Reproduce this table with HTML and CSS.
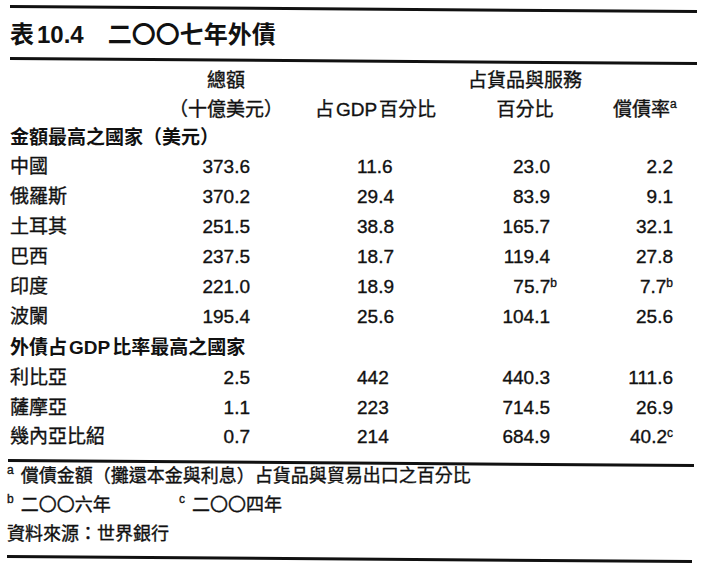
FILE: index.html
```html
<!DOCTYPE html>
<html lang="zh-Hant">
<head>
<meta charset="utf-8">
<title>表10.4 二〇〇七年外債</title>
<link rel="stylesheet" href="styles.css">
</head>
<body>
<div class="page">
  <div class="rule r1"></div>
  <h1 class="title"><span class="tno">表<span class="lat">10.4</span></span><span class="tname">二〇〇七年外債</span></h1>
  <div class="rule r2"></div>
  <div class="table">
    <div class="row head">
      <div class="c0"></div>
      <div class="hc">總額<br>（十億美元）</div>
      <div class="hc">占<span class="lat">GDP</span>百分比</div>
      <div class="hc">占貨品與服務<br>百分比</div>
      <div class="hc h4">償債率<sup class="fn">a</sup></div>
    </div>
    <div class="group g1">金額最高之國家（美元）</div>
    <div class="row data"><div>中國</div><div class="n1">373.6</div><div class="n2">11.6</div><div class="n3">23.0</div><div class="n4">2.2</div></div>
    <div class="row data"><div>俄羅斯</div><div class="n1">370.2</div><div class="n2">29.4</div><div class="n3">83.9</div><div class="n4">9.1</div></div>
    <div class="row data"><div>土耳其</div><div class="n1">251.5</div><div class="n2">38.8</div><div class="n3">165.7</div><div class="n4">32.1</div></div>
    <div class="row data"><div>巴西</div><div class="n1">237.5</div><div class="n2">18.7</div><div class="n3">119.4</div><div class="n4">27.8</div></div>
    <div class="row data"><div>印度</div><div class="n1">221.0</div><div class="n2">18.9</div><div class="n3">75.7<sup class="fn num hang">b</sup></div><div class="n4">7.7<sup class="fn num">b</sup></div></div>
    <div class="row data"><div>波闌</div><div class="n1">195.4</div><div class="n2">25.6</div><div class="n3">104.1</div><div class="n4">25.6</div></div>
    <div class="group g2">外債占<span class="lat">GDP</span>比率最高之國家</div>
    <div class="row data s"><div>利比亞</div><div class="n1">2.5</div><div class="n2">442</div><div class="n3">440.3</div><div class="n4">111.6</div></div>
    <div class="row data s"><div>薩摩亞</div><div class="n1">1.1</div><div class="n2">223</div><div class="n3">714.5</div><div class="n4">26.9</div></div>
    <div class="row data s"><div>幾內亞比紹</div><div class="n1">0.7</div><div class="n2">214</div><div class="n3">684.9</div><div class="n4">40.2<sup class="fn num">c</sup></div></div>
  </div>
  <div class="rule r3"></div>
  <div class="notes">
    <p><sup class="fn gap">a</sup>償債金額（攤還本金與利息）占貨品與貿易出口之百分比</p>
    <p><span class="fitem"><sup class="fn gap">b</sup>二〇〇六年</span><span><sup class="fn gap">c</sup>二〇〇四年</span></p>
    <p>資料來源：世界銀行</p>
  </div>
  <div class="rule r4"></div>
</div>
</body>
</html>
```
FILE: styles.css
```css
* {
  box-sizing: border-box;
  margin: 0;
  padding: 0;
}

body {
  margin: 0;
  background: #fff;
  color: #111;
  font-family: "Liberation Sans", "Noto Sans CJK TC", sans-serif;
  -webkit-text-stroke: 0.35px #111;
}

.page {
  width: 714px;
  height: 572px;
  padding: 5px 0 0 10px;
  overflow: hidden;
}

.rule {
  height: 3px;
  width: 687px;
  background: #111;
  transform: rotate(0.42deg);
  transform-origin: 0 50%;
}

.title {
  font-size: 24px;
  font-weight: 700;
  height: 49px;
  padding-top: 4px;
  line-height: 45px;
  -webkit-text-stroke: 0;
}

.title .lat {
  margin-left: 3px;
}

.tname {
  margin-left: 22px;
}

.lat {
  margin: 0 2px;
}

.table {
  padding-top: 6px;
}

.row {
  display: grid;
  grid-template-columns: 150px 132px 167px 132px 105px;
  font-size: 19px;
}

.head {
  height: 58px;
  line-height: 29px;
  align-items: end;
}

.hc {
  text-align: center;
}

.h4 {
  text-align: left;
  padding-left: 22px;
}

.group {
  font-size: 19px;
  font-weight: 700;
  -webkit-text-stroke: 0;
}

.g1 {
  height: 28px;
  line-height: 28px;
}

.g2 {
  height: 31px;
  line-height: 31px;
}

.data {
  height: 30px;
  line-height: 30px;
}

.data.s {
  height: 29.5px;
  line-height: 29.5px;
}

.n1 {
  text-align: right;
  padding-right: 42px;
}

.n2 {
  padding-left: 65px;
}

.n3 {
  text-align: right;
  padding-right: 41px;
}

.n4 {
  text-align: right;
  padding-right: 23px;
}

.fn {
  font-size: 12px;
  vertical-align: 8px;
  line-height: 0;
}

.fn.num {
  vertical-align: 6px;
}

.fn.hang {
  margin-right: -7px;
}

.fn.gap {
  margin-right: 7px;
}

.r3 {
  margin-top: 7.5px;
  margin-left: -2px;
  width: 686px;
}

.notes {
  font-size: 18px;
  line-height: 29px;
  margin-left: -3px;
}

.fitem {
  display: inline-block;
  width: 172px;
}

.r4 {
  margin-top: 6px;
  margin-left: -3px;
  width: 685px;
}
```
